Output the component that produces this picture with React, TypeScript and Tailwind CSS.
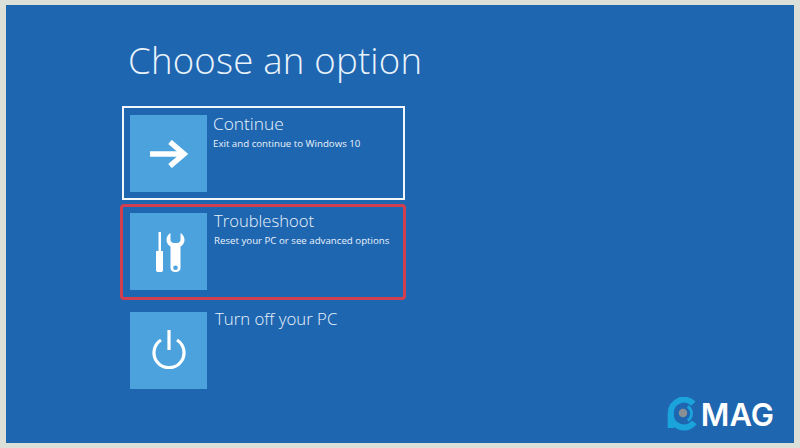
import React from 'react';

const fontStack = { fontFamily: '"Open Sans", "Noto Sans", sans-serif' };

const Tile: React.FC<{ children: React.ReactNode }> = ({ children }) => (
  <div className="w-[77px] h-[77px] shrink-0 bg-[#4ba2dc] flex items-center justify-center">{children}</div>
);

const App: React.FC = () => {
  return (
    <div className="w-[800px] h-[448px] bg-[#dde0d8] pt-[5px] pb-[5px] px-[6px] overflow-hidden" style={fontStack}>
      <div className="relative w-full h-full bg-[#1f66b1] pl-[114px] pt-[32px] text-[#eaf3fb]">
        {/* Title */}
        <h1 className="text-[36.6px] leading-[46px] font-light ml-[8px] tracking-[0.2px]">Choose an option</h1>

        {/* Continue */}
        <div className="mt-[23px] w-[283px] h-[94px] border-2 border-[#f2f6fa] pl-[6px] pt-[7px] flex gap-[6px] ml-[2px]">
          <Tile>
            <svg width="40" height="28" viewBox="0 0 40 28" fill="none" stroke="#ffffff" strokeWidth="5.5">
              <path d="M1 14H35" />
              <path d="M21 2L35 14L21 26" />
            </svg>
          </Tile>
          <div className="-mt-[3px]">
            <div className="text-[17.3px] leading-[24px] font-light">Continue</div>
            <div className="text-[9.7px] leading-[14px] mt-[1px]">Exit and continue to Windows 10</div>
          </div>
        </div>

        {/* Troubleshoot */}
        <div className="mt-[4px] w-[286px] h-[96px] border-[3px] border-[#d03f50] rounded-[4px] pl-[7px] pt-[5px] flex gap-[7px]">
          <div className="mt-[1px]">
            <Tile>
              <svg className="ml-[2px]" width="30" height="40" viewBox="0 0 30 40" fill="#ffffff">
                <rect x="3.500" y="0" width="2.500" height="20" />
                <path d="M1 19H8V38.500L7 40H2L1 38.500Z" />
                <path fillRule="evenodd" d="M15.500 1V7.500C15.500 9.500 17 11 19 11H22C24 11 25.500 9.500 25.500 7.500V1C28 2.500 29.500 5 29.500 8C29.500 11 27.500 13.500 25.500 14.500V36C25.500 38.500 23.500 40 20.500 40C17.500 40 15.500 38.500 15.500 36V14.500C13.500 13.500 11.500 11 11.500 8C11.500 5 13 2.500 15.500 1ZM20.500 33.500A2.300 2.300 0 1 0 20.500 38.100A2.300 2.300 0 1 0 20.500 33.500Z" />
              </svg>
            </Tile>
          </div>
          <div className="-mt-[3px]">
            <div className="text-[16.6px] leading-[24px] font-light">Troubleshoot</div>
            <div className="text-[9.7px] leading-[14px] mt-[1px]">Reset your PC or see advanced options</div>
          </div>
        </div>

        {/* Turn off */}
        <div className="mt-[12px] ml-[10px] flex gap-[8px]">
          <Tile>
            <svg className="-mt-[3px]" width="36" height="40" viewBox="0 0 36 40" fill="none" stroke="#ffffff" strokeWidth="3.200">
              <path d="M18 1V21" />
              <path d="M10 11A15 15 0 1 0 26 11" />
            </svg>
          </Tile>
          <div className="text-[16.8px] leading-[24px] font-light -mt-[5px]">Turn off your PC</div>
        </div>

        {/* Watermark logo */}
        <div className="absolute right-[20px] bottom-[12px] flex items-center">
          <svg width="32" height="34" viewBox="0 0 34 36" fill="none">
            <path d="M28 7A14 14 0 0 0 4 17V33" stroke="#1ba3dc" strokeWidth="6.500" />
            <path d="M4 18A14 14 0 0 0 29 27" stroke="#1ba3dc" strokeWidth="6.500" />
            <circle cx="17" cy="17" r="4.500" fill="#8a8f96" />
            <path d="M22 10A9 9 0 0 1 22 25" stroke="#1ba3dc" strokeWidth="3" />
          </svg>
          <span className="text-[31px] leading-none font-semibold text-white ml-[2px]" style={{ fontFamily: '"Inter", sans-serif' }}>MAG</span>
        </div>
      </div>
    </div>
  );
};

export default App;
